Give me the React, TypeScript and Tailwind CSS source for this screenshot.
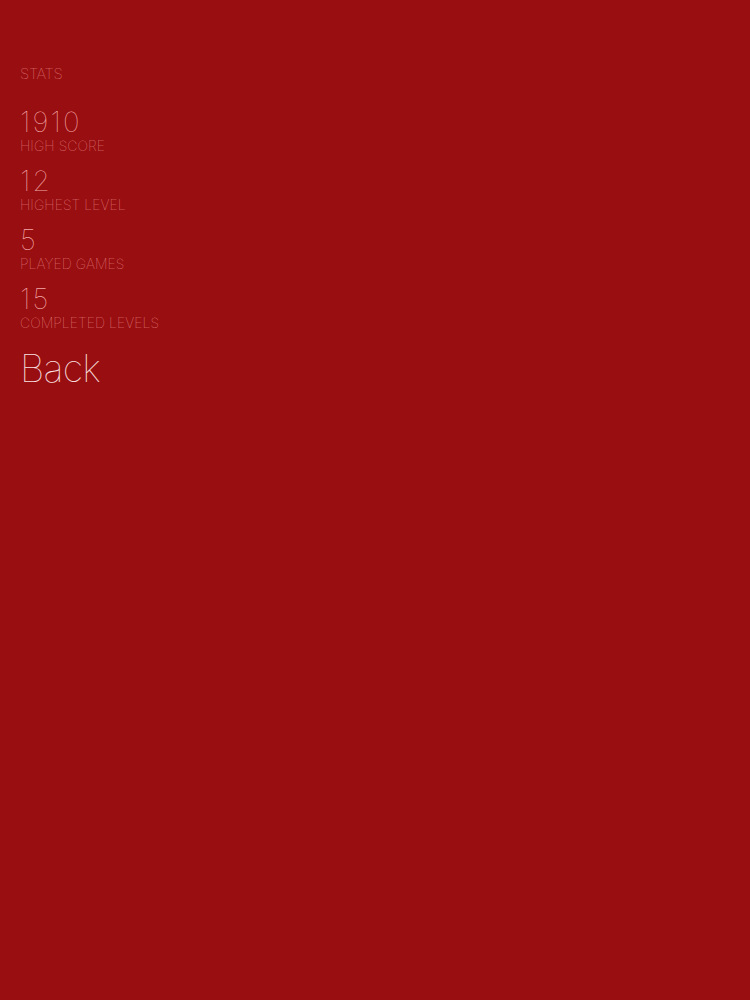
export default function App() {
  const stats = [
    { value: "1910", label: "HIGH SCORE" },
    { value: "12", label: "HIGHEST LEVEL" },
    { value: "5", label: "PLAYED GAMES" },
    { value: "15", label: "COMPLETED LEVELS" },
  ];

  return (
    <div className="min-h-screen w-full bg-[#990e10] px-5 pt-[66px] font-['Inter','Liberation_Sans',sans-serif] font-thin">
      {/* Header */}
      <div className="text-[15px] leading-[16px] tracking-[-0.02em] text-[#f09c9d]">STATS</div>

      {/* Stat list */}
      <div className="mt-[25px] flex flex-col gap-[12px]">
        {stats.map((s) => (
          <div key={s.label} className="flex flex-col">
            <span className="text-[28px] leading-[31px] tracking-[0.08em] text-[#f3a8a8]">{s.value}</span>
            <span className="text-[14px] leading-[16px] tracking-[0.005em] text-[#f09c9d]">{s.label}</span>
          </div>
        ))}
      </div>

      <button className="mt-[17px] text-[38px] leading-[40px] tracking-[-0.02em] text-[#fbe2e2]">Back</button>
    </div>
  );
}
